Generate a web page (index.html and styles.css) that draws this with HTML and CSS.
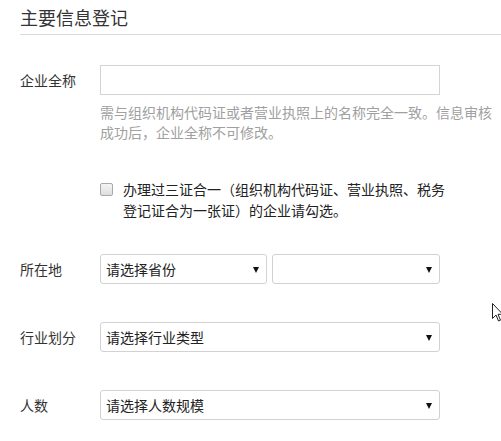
FILE: index.html
```html
<!DOCTYPE html>
<html lang="zh-CN">
<head>
<meta charset="utf-8">
<title>主要信息登记</title>
<link rel="stylesheet" href="styles.css">
</head>
<body>
<div class="page">
  <h2 class="title">主要信息登记</h2>

  <div class="row row-name">
    <label class="label">企业全称</label>
    <div class="field">
      <input class="text-input" type="text">
      <p class="help">需与组织机构代码证或者营业执照上的名称完全一致。信息审核成功后，企业全称不可修改。</p>
    </div>
  </div>

  <div class="row row-check">
    <span class="label"></span>
    <label class="check">
      <span class="box"></span>
      <span class="check-text">办理过三证合一（组织机构代码证、营业执照、税务登记证合为一张证）的企业请勾选。</span>
    </label>
  </div>

  <div class="row row-loc">
    <label class="label">所在地</label>
    <div class="field pair">
      <div class="select half"><span class="sel-text">请选择省份</span><span class="arrow"></span></div>
      <div class="select half"><span class="sel-text"></span><span class="arrow"></span></div>
    </div>
  </div>

  <div class="row row-ind">
    <label class="label">行业划分</label>
    <div class="field">
      <div class="select full"><span class="sel-text">请选择行业类型</span><span class="arrow"></span></div>
    </div>
  </div>

  <div class="row row-num">
    <label class="label">人数</label>
    <div class="field">
      <div class="select full"><span class="sel-text">请选择人数规模</span><span class="arrow"></span></div>
    </div>
  </div>
</div>

<svg class="cursor" width="12" height="20" viewBox="0 0 12 20">
  <path d="M0.5 0.5 L0.5 15.5 L4 12 L6.5 18 L8.5 17.2 L6 11.3 L10.8 11.3 Z" fill="#fff" stroke="#222" stroke-width="1"/>
</svg>
</body>
</html>
```

FILE: styles.css
```css
* { box-sizing: border-box; }

body {
  margin: 0;
  background: #fff;
  font-family: "Noto Sans CJK SC", "Microsoft YaHei", "Liberation Sans", sans-serif;
  font-size: 14px;
  color: #333;
}

.page {
  padding-left: 20px;
}

.title {
  margin: 4px 0 0;
  height: 31px;
  padding-bottom: 5px;
  line-height: 26px;
  font-size: 18px;
  font-weight: normal;
  color: #333;
  border-bottom: 1px solid #dcdcdc;
}

.row {
  display: flex;
  align-items: flex-start;
}

.label {
  width: 80px;
  flex: none;
  line-height: 30px;
  font-size: 14px;
  color: #333;
}

.row-name { margin-top: 30px; }
.row-check { margin-top: 35px; }
.row-loc { margin-top: 33px; }
.row-ind { margin-top: 38px; }
.row-num { margin-top: 38px; }

.text-input {
  display: block;
  width: 340px;
  height: 30px;
  margin: 0;
  border: 1px solid #d4d4d4;
  border-radius: 0;
  padding: 0 6px;
  font: inherit;
  outline: none;
}

.help {
  width: 400px;
  margin: 7px 0 0;
  line-height: 20px;
  color: #a0a0a0;
}

.check {
  display: flex;
  align-items: flex-start;
}

.box {
  width: 13px;
  height: 13px;
  margin-top: 6px;
  flex: none;
  border: 1px solid #a9a9a9;
  border-radius: 2px;
  background: linear-gradient(#f4f4f4, #dedede);
}

.check-text {
  width: 332px;
  margin-left: 10px;
  padding-top: 2px;
  line-height: 21px;
  color: #222;
}

.pair {
  display: flex;
  gap: 5px;
}

.select {
  position: relative;
  height: 30px;
  border: 1px solid #d2d2d2;
  border-radius: 3px;
  padding-left: 5px;
  line-height: 28px;
  color: #222;
  background: #fff;
}

.half { width: 167px; }
.half + .half { width: 168px; }
.full { width: 340px; }

.arrow {
  position: absolute;
  right: 7px;
  top: 12px;
  width: 0;
  height: 0;
  border-left: 3.5px solid transparent;
  border-right: 3.5px solid transparent;
  border-top: 6px solid #111;
}

.cursor {
  position: absolute;
  left: 492px;
  top: 303px;
}
```
